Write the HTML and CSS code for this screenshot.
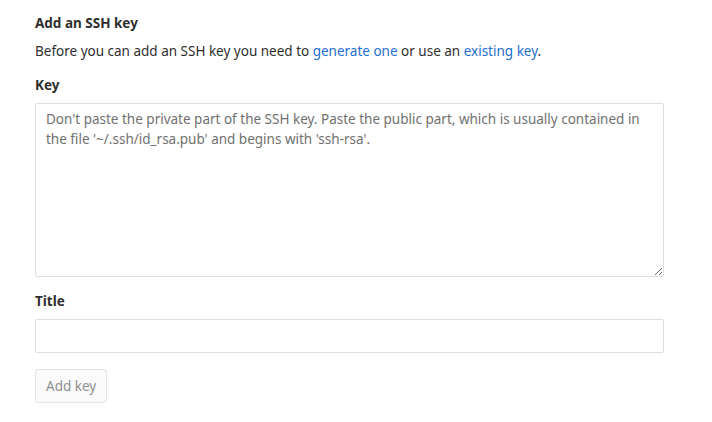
FILE: index.html
```html
<!DOCTYPE html>
<html>
<head>
<meta charset="utf-8">
<link rel="stylesheet" href="styles.css">
</head>
<body>
<form class="ssh-form">
  <h4 class="heading">Add an SSH key</h4>
  <p class="intro">Before you can add an SSH key you need to <a href="#">generate one</a> or use an <a href="#">existing key</a>.</p>
  <div class="group">
    <label class="label" for="key">Key</label>
    <textarea id="key" class="field area" placeholder="Don't paste the private part of the SSH key. Paste the public part, which is usually contained in the file '~/.ssh/id_rsa.pub' and begins with 'ssh-rsa'."></textarea>
  </div>
  <div class="group">
    <label class="label" for="title">Title</label>
    <input id="title" class="field input" type="text">
  </div>
  <div class="actions">
    <button type="button" class="btn" disabled>Add key</button>
  </div>
</form>
</body>
</html>
```

FILE: styles.css
```css
html, body {
  margin: 0;
  padding: 0;
  background: #fff;
}
body {
  font-family: "Noto Sans", "Open Sans", sans-serif;
  font-size: 13.5px;
  color: #2e2e2e;
}
.ssh-form {
  width: 629px;
  padding: 12px 0 0 35px;
}
.heading {
  margin: 0 0 7px;
  font-size: 13.5px;
  font-weight: 700;
  line-height: 22px;
}
.intro {
  margin: 0 0 14px;
  line-height: 20px;
}
.intro a {
  color: #1f6fd0;
  text-decoration: none;
}
.group {
  display: flex;
  flex-direction: column;
  margin-bottom: 14px;
}
.label {
  font-weight: 700;
  line-height: 20px;
  margin-bottom: 8px;
}
.field {
  box-sizing: border-box;
  width: 629px;
  border: 1px solid #dfdfdf;
  border-radius: 2px;
  font-family: inherit;
  font-size: 13.5px;
  color: #2e2e2e;
  background: #fff;
  margin: 0;
  outline: none;
}
.area {
  height: 174px;
  padding: 5px 10px;
  line-height: 20px;
  resize: vertical;
}
.area::placeholder {
  color: #707070;
  opacity: 1;
}
.input {
  height: 34px;
  padding: 6px 10px;
}
.actions {
  padding-top: 2px;
}
.btn {
  box-sizing: border-box;
  height: 34px;
  padding: 0 10px;
  border: 1px solid #e5e5e5;
  border-radius: 3px;
  background: #fafafa;
  color: #8f8f8f;
  font-family: inherit;
  font-size: 13.5px;
}
```
